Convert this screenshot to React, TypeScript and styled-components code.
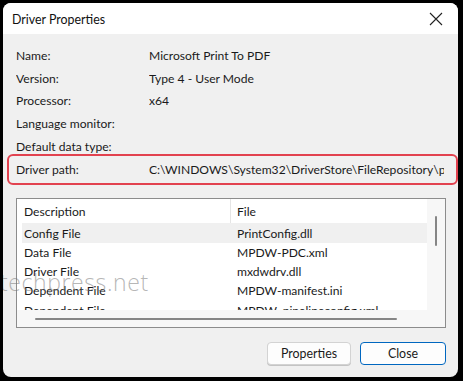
import React from "react";
import styled, { createGlobalStyle } from "styled-components";

const GlobalStyle = createGlobalStyle`
  html, body {
    margin: 0;
    padding: 0;
    background: #000;
  }
  body {
    width: 463px;
    height: 381px;
    overflow: hidden;
    font-family: Lato, "Noto Sans", sans-serif;
  }
`;

const Screen = styled.div`
  width: 463px;
  height: 381px;
  padding: 3px 5px 4px 3px;
  box-sizing: border-box;
  background: #000;
`;

const Window = styled.div`
  position: relative;
  width: 455px;
  height: 374px;
  background: #f0f0f0;
  border-radius: 8px;
  overflow: hidden;
  display: flex;
  flex-direction: column;
  color: #1a1a1a;
  font-size: 12.1px;
`;

const TitleBar = styled.div`
  height: 31px;
  background: #fff;
  display: flex;
  align-items: center;
  justify-content: space-between;
  padding: 0 8px 0 9px;
  flex-shrink: 0;
`;

const Title = styled.span`
  color: #111;
  font-size: 12.4px;
  margin-top: 1px;
`;

const CloseIcon = styled.svg`
  width: 28px;
  height: 28px;
`;

const Body = styled.div`
  flex: 1;
  display: flex;
  flex-direction: column;
  padding: 10px 12px 0 13px;
`;

const InfoGrid = styled.div`
  display: flex;
  flex-direction: column;
`;

const InfoRow = styled.div<{ $highlight?: boolean }>`
  display: grid;
  grid-template-columns: 133px 1fr;
  align-items: center;
  height: ${(p) => (p.$highlight ? "27px" : "22.7px")};
  white-space: nowrap;
  overflow: hidden;
  ${(p) =>
    p.$highlight &&
    `
    margin: -3px -12px 0 -9px;
    padding: 0 12px 0 7px;
    border: 2px solid #e2424f;
    border-radius: 6px;
  `}
`;

const Label = styled.span``;

const Value = styled.span`
  overflow: hidden;
`;

const ListBox = styled.div`
  margin-top: 13px;
  height: 130px;
  border: 1px solid #8c8c8c;
  background: #f7f7f7;
  box-sizing: border-box;
  display: grid;
  grid-template-columns: 1fr 18px;
  grid-template-rows: 1fr 17px;
  overflow: hidden;
`;

const ListView = styled.div`
  background: #fff;
  padding: 0 0 0 5px;
  overflow: hidden;
`;

const HeaderRow = styled.div`
  display: grid;
  grid-template-columns: 208px 1fr;
  height: 24px;
  align-items: center;
`;

const HeaderCell = styled.div<{ $divider?: boolean }>`
  height: 100%;
  display: flex;
  align-items: center;
  padding-left: ${(p) => (p.$divider ? "6px" : "2px")};
  border-left: ${(p) => (p.$divider ? "1px solid #e5e5e5" : "none")};
`;

const DataRow = styled.div<{ $selected?: boolean }>`
  display: grid;
  grid-template-columns: 208px 1fr;
  height: 19.3px;
  align-items: center;
  background: ${(p) => (p.$selected ? "#f0f0f0" : "transparent")};
  white-space: nowrap;
`;

const Cell = styled.span<{ $second?: boolean }>`
  padding-left: ${(p) => (p.$second ? "7px" : "2px")};
`;

const VScroll = styled.div`
  display: flex;
  justify-content: center;
  padding-top: 17px;
`;

const VThumb = styled.div`
  width: 2px;
  height: 30px;
  background: #868686;
  border-radius: 1px;
`;

const HScroll = styled.div`
  display: flex;
  align-items: center;
  padding-left: 18px;
`;

const HThumb = styled.div`
  width: 362px;
  height: 2px;
  background: #868686;
  border-radius: 1px;
`;

const Corner = styled.div``;

const ButtonRow = styled.div`
  display: flex;
  justify-content: flex-end;
  gap: 9px;
  margin-top: 14px;
`;

const Button = styled.button<{ $primary?: boolean }>`
  width: ${(p) => (p.$primary ? "86px" : "84px")};
  height: 23px;
  font-family: inherit;
  font-size: 12.4px;
  color: #1a1a1a;
  background: #fdfdfd;
  border: 1px solid ${(p) => (p.$primary ? "#0067c0" : "#d3d3d3")};
  border-radius: 4px;
  box-shadow: ${(p) => (p.$primary ? "none" : "0 1px 0 #c4c4c4")};
  padding: 0;
`;

const Watermark = styled.div`
  position: absolute;
  left: -3px;
  top: 268px;
  font-family: "Open Sans", "Noto Sans", sans-serif;
  font-weight: 300;
  font-size: 23px;
  line-height: 1;
  letter-spacing: 0.6px;
  color: rgba(120, 120, 120, 0.55);
  pointer-events: none;
`;

const info = [
  ["Name:", "Microsoft Print To PDF"],
  ["Version:", "Type 4 - User Mode"],
  ["Processor:", "x64"],
  ["Language monitor:", ""],
  ["Default data type:", ""],
];

const files = [
  ["Config File", "PrintConfig.dll"],
  ["Data File", "MPDW-PDC.xml"],
  ["Driver File", "mxdwdrv.dll"],
  ["Dependent File", "MPDW-manifest.ini"],
  ["Dependent File", "MPDW_pipelineconfig.xml"],
];

export default function App() {
  return (
    <Screen>
      <GlobalStyle />
      <Window>
        <TitleBar>
          <Title>Driver Properties</Title>
          <CloseIcon viewBox="0 0 28 28">
            <path d="M8 8 L20 20 M20 8 L8 20" stroke="#222" strokeWidth="1.1" fill="none" />
          </CloseIcon>
        </TitleBar>
        <Body>
          <InfoGrid>
            {info.map(([l, v]) => (
              <InfoRow key={l}>
                <Label>{l}</Label>
                <Value>{v}</Value>
              </InfoRow>
            ))}
            <InfoRow $highlight>
              <Label>Driver path:</Label>
              <Value>C:\WINDOWS\System32\DriverStore\FileRepository\prnms009.inf_amd64</Value>
            </InfoRow>
          </InfoGrid>
          <ListBox>
            <ListView>
              <HeaderRow>
                <HeaderCell>Description</HeaderCell>
                <HeaderCell $divider>File</HeaderCell>
              </HeaderRow>
              {files.map(([d, f], i) => (
                <DataRow key={i} $selected={i === 0}>
                  <Cell>{d}</Cell>
                  <Cell $second>{f}</Cell>
                </DataRow>
              ))}
            </ListView>
            <VScroll>
              <VThumb />
            </VScroll>
            <HScroll>
              <HThumb />
            </HScroll>
            <Corner />
          </ListBox>
          <ButtonRow>
            <Button>Properties</Button>
            <Button $primary>Close</Button>
          </ButtonRow>
        </Body>
        <Watermark>techpress.net</Watermark>
      </Window>
    </Screen>
  );
}
